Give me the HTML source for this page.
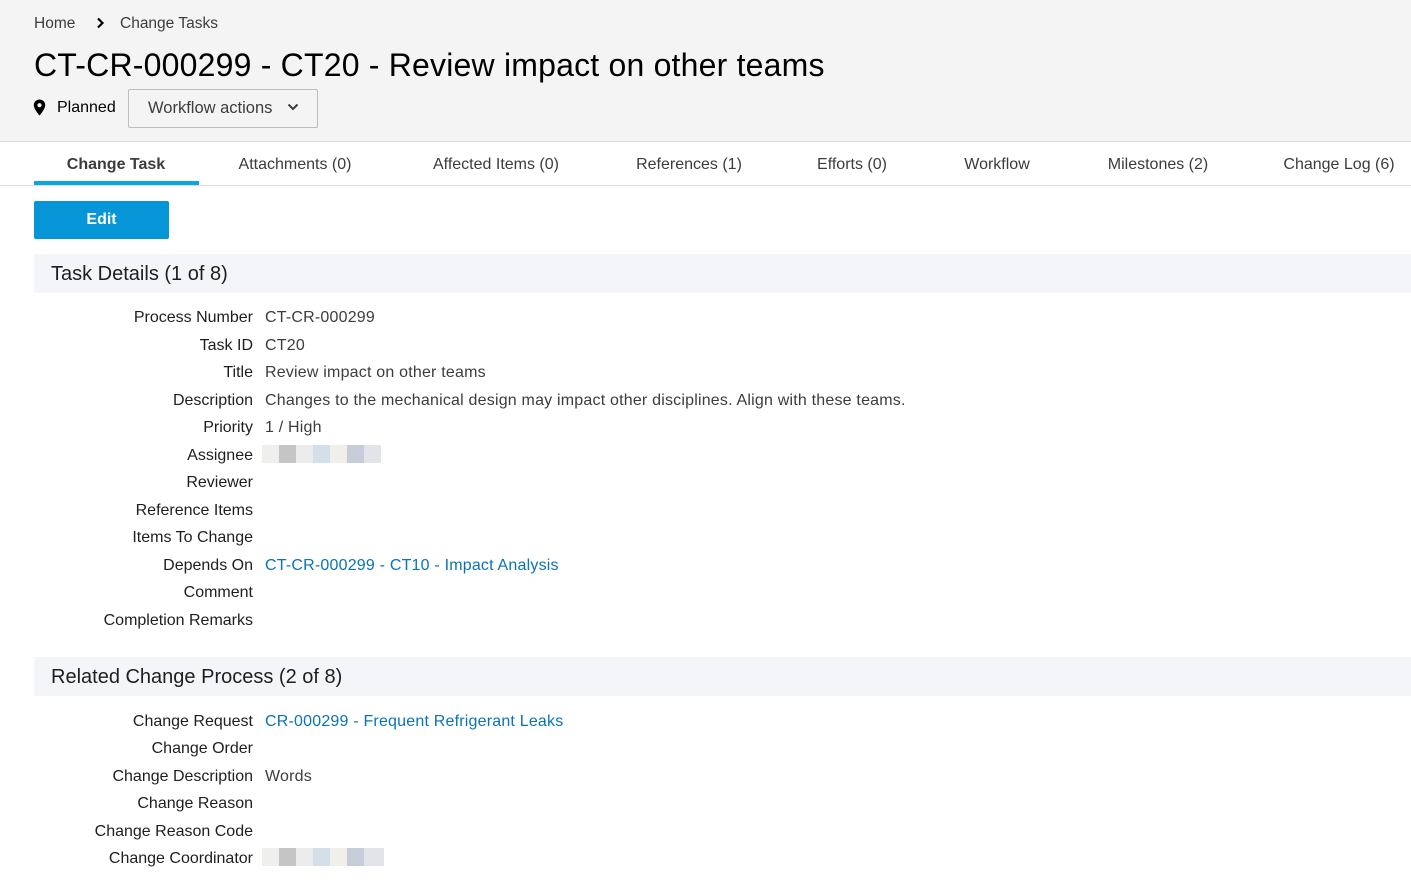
<!DOCTYPE html>
<html><head><meta charset="utf-8"><style>
*{margin:0;padding:0;box-sizing:border-box}
body{width:1411px;height:890px;overflow:hidden;background:#fff;font-family:"Liberation Sans",sans-serif;color:#1e1e1e;position:relative}
.hdr{position:absolute;left:0;top:0;width:1411px;height:142px;background:#f4f4f4;border-bottom:1px solid #d9d9d9}
.abs{position:absolute;white-space:nowrap}
.bc{font-size:15.5px;color:#3c3c3c;top:15px}
h1{position:absolute;left:34px;top:47px;font-size:32px;font-weight:normal;color:#000;white-space:nowrap;letter-spacing:0.2px}
.wf{position:absolute;left:128px;top:89px;width:190px;height:39px;border:1px solid #bdbdbd;border-radius:2px;background:#f4f4f4;font-size:16.5px;color:#3c3c3c;padding:9px 0 0 19px}
.tabs{position:absolute;left:0;top:142px;width:1411px;height:44px;border-bottom:1px solid #ddd}
.tab{position:absolute;top:14px;font-size:16px;color:#3c3c3c;transform:translateX(-50%);white-space:nowrap}
.edit{position:absolute;left:34px;top:201px;width:135px;height:38px;background:#0696d7;border-radius:2px;color:#fff;font-weight:bold;font-size:16px;text-align:center;line-height:38px}
.sec{position:absolute;left:34px;width:1377px;height:39px;background:#f4f5f9;font-size:20px;color:#1e1e1e;padding:9px 0 0 17px}
.lbl{position:absolute;right:1158px;font-size:16px;color:#1e1e1e;white-space:nowrap;margin-top:1px}
.val{position:absolute;left:265px;font-size:16px;color:#3c3c3c;white-space:nowrap;margin-top:1px;letter-spacing:0.2px}
.lnk{color:#0a73b6}
.blur{position:absolute;left:262px;height:18px;display:flex}
.blur span{width:17px;height:18px}
</style></head><body>
<div class="hdr">
<div class="abs bc" style="left:34px">Home</div>
<svg class="abs" style="left:96px;top:17px" width="9" height="12" viewBox="0 0 9 12"><path d="M2 1.5L6.5 6L2 10.5" fill="none" stroke="#000" stroke-width="2.2"/></svg>
<div class="abs bc" style="left:120px">Change Tasks</div>
<h1>CT-CR-000299 - CT20 - Review impact on other teams</h1>
<svg class="abs" style="left:33px;top:99px" width="13" height="17" viewBox="0 0 13 17"><path d="M6.5 0.5C3.2 0.5 0.8 3 0.8 6.2C0.8 10 6.5 16.5 6.5 16.5S12.2 10 12.2 6.2C12.2 3 9.8 0.5 6.5 0.5Z" fill="#000"/><circle cx="6.5" cy="6.2" r="2.1" fill="#f4f4f4"/></svg>
<div class="abs" style="left:57px;top:99px;font-size:16px;color:#000">Planned</div>
<div class="wf">Workflow actions</div>
<svg class="abs" style="left:287px;top:103px" width="12" height="8" viewBox="0 0 12 8"><path d="M1.5 1.5L6 6L10.5 1.5" fill="none" stroke="#3c3c3c" stroke-width="2"/></svg>
</div>
<div class="tabs">
<div class="tab" style="left:116px;font-weight:bold">Change Task</div>
<div style="position:absolute;left:34px;top:39px;width:165px;height:4px;background:#0aa5e3"></div>
<div class="tab" style="left:295px">Attachments (0)</div>
<div class="tab" style="left:496px">Affected Items (0)</div>
<div class="tab" style="left:689px">References (1)</div>
<div class="tab" style="left:852px">Efforts (0)</div>
<div class="tab" style="left:997px">Workflow</div>
<div class="tab" style="left:1158px">Milestones (2)</div>
<div class="tab" style="left:1339px">Change Log (6)</div>
</div>
<div class="edit">Edit</div>
<div class="sec" style="top:254px">Task Details (1 of 8)</div>
<div class="lbl" style="top:308px">Process Number</div><div class="val" style="top:308px">CT-CR-000299</div>
<div class="lbl" style="top:336px">Task ID</div><div class="val" style="top:336px">CT20</div>
<div class="lbl" style="top:363px">Title</div><div class="val" style="top:363px">Review impact on other teams</div>
<div class="lbl" style="top:391px">Description</div><div class="val" style="top:391px">Changes to the mechanical design may impact other disciplines. Align with these teams.</div>
<div class="lbl" style="top:418px">Priority</div><div class="val" style="top:418px">1 / High</div>
<div class="lbl" style="top:446px">Assignee</div>
<div class="blur" style="top:445px"><span style="background:#eff0ee"></span><span style="background:#c5c5c5"></span><span style="background:#ececec"></span><span style="background:#d3e0e9"></span><span style="background:#eff0e9"></span><span style="background:#c6ccd8"></span><span style="background:#e1e5e9;width:17px"></span></div>
<div class="lbl" style="top:473px">Reviewer</div>
<div class="lbl" style="top:501px">Reference Items</div>
<div class="lbl" style="top:528px">Items To Change</div>
<div class="lbl" style="top:556px">Depends On</div><div class="val lnk" style="top:556px">CT-CR-000299 - CT10 - Impact Analysis</div>
<div class="lbl" style="top:583px">Comment</div>
<div class="lbl" style="top:611px">Completion Remarks</div>
<div class="sec" style="top:657px">Related Change Process (2 of 8)</div>
<div class="lbl" style="top:712px">Change Request</div><div class="val lnk" style="top:712px">CR-000299 - Frequent Refrigerant Leaks</div>
<div class="lbl" style="top:739px">Change Order</div>
<div class="lbl" style="top:767px">Change Description</div><div class="val" style="top:767px">Words</div>
<div class="lbl" style="top:794px">Change Reason</div>
<div class="lbl" style="top:822px">Change Reason Code</div>
<div class="lbl" style="top:849px">Change Coordinator</div>
<div class="blur" style="top:848px"><span style="background:#eff0ee"></span><span style="background:#c5c5c5"></span><span style="background:#ececec"></span><span style="background:#d3e0e9"></span><span style="background:#eff0e9"></span><span style="background:#c6ccd8"></span><span style="background:#e1e5e9;width:20px"></span></div>
</body></html>
